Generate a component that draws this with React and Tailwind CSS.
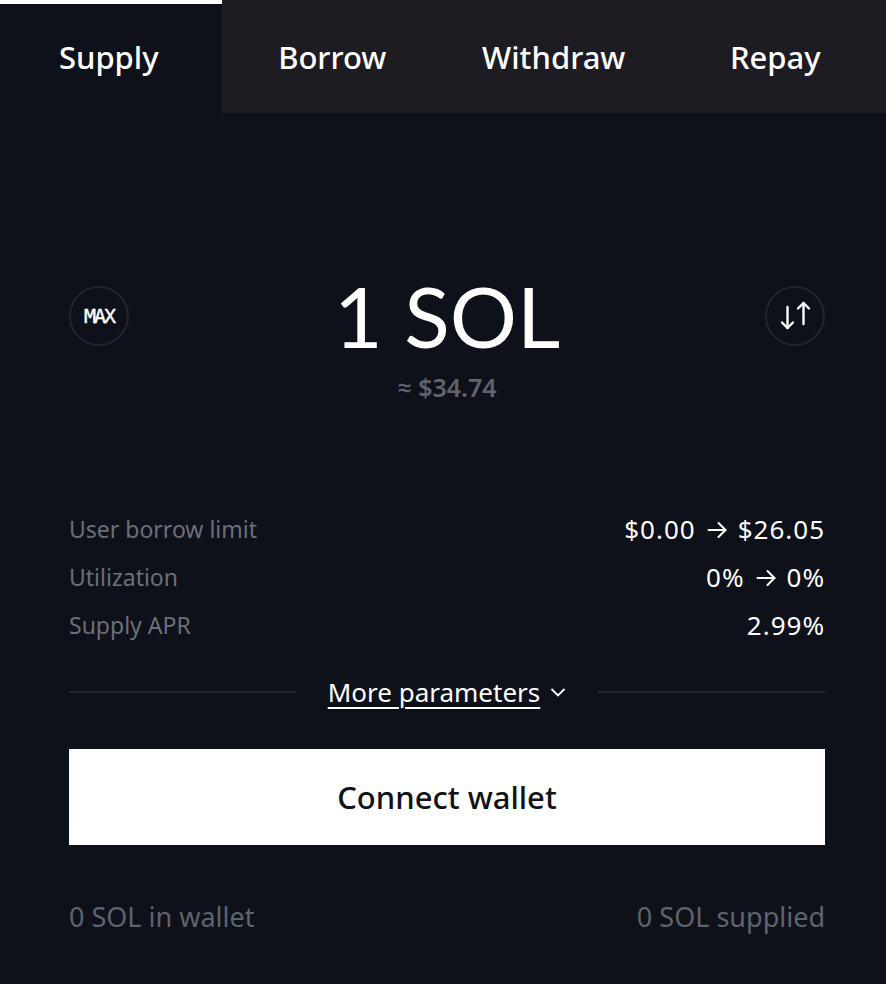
import React from "react";

const sans = { fontFamily: '"Noto Sans", "Open Sans", sans-serif' };

function SwapIcon() {
  return (
    <svg width="36" height="36" viewBox="0 0 36 36" fill="none" stroke="white" strokeWidth="2.4" strokeLinecap="round" strokeLinejoin="round">
      <path d="M10.5 9V30" />
      <path d="M5 24.5L10.5 30L16 24.5" />
      <path d="M26.5 5V26" />
      <path d="M21 10.5L26.5 5L32 10.5" />
    </svg>
  );
}

function Arrow() {
  return (
    <svg width="20" height="18" viewBox="0 0 20 18" fill="none" stroke="white" strokeWidth="2" strokeLinecap="round" strokeLinejoin="round" className="inline-block shrink-0 w-[20px] h-[18px] mx-[11px] mt-[1px]">
      <path d="M1.5 9H18.5" />
      <path d="M11.5 2L18.5 9L11.5 16" />
    </svg>
  );
}

function Row({ label, value }) {
  return (
    <div className="flex items-center justify-between h-[48px]">
      <span className="text-[23px] text-[#6b6f78]">{label}</span>
      <span className="text-[26px] text-white flex items-center tracking-[1px]">{value}</span>
    </div>
  );
}

export default function App() {
  return (
    <div className="w-[886px] h-[984px] bg-[#0e111a] flex flex-col" style={sans}>
      <div className="flex h-[113px] bg-[#1c1c22]">
        {["Supply", "Borrow", "Withdraw", "Repay"].map((t, i) => (
          <div
            key={t}
            className={
              "flex-1 flex items-center justify-center text-[31px] font-medium text-white " +
              (i === 0 ? "bg-[#0e111a] border-t-4 border-white" : "")
            }
          >
            <span className={i === 0 ? "-mt-[2px] -translate-x-[2px]" : "mt-[2px]"}>{t}</span>
          </div>
        ))}
      </div>

      <div className="flex flex-col pl-[69px] pr-[61px]">
        <div className="flex items-center justify-between mt-[173px] h-[60px]">
          <div className="w-[60px] h-[60px] rounded-full border-2 border-[#22252d] flex items-center justify-center">
            <span className="text-[20px] text-white" style={{ fontFamily: '"DejaVu Sans Mono", monospace', letterSpacing: "-2px", WebkitTextStroke: "0.4px white" }}>MAX</span>
          </div>
          <div className="text-[84px] font-normal text-white leading-none" style={{ fontFamily: 'Lato, sans-serif' }}>1 SOL</div>
          <div className="w-[60px] h-[60px] rounded-full border-2 border-[#22252d] flex items-center justify-center">
            <SwapIcon />
          </div>
        </div>
        <div className="flex justify-center mt-[28px] h-[28px] items-center">
          <span className="text-[25px] font-semibold text-[#5f636c]">≈ $34.74</span>
        </div>

        <div className="flex flex-col mt-[103px]">
          <Row label="User borrow limit" value={<>$0.00<Arrow />$26.05</>} />
          <Row label="Utilization" value={<>0%<Arrow />0%</>} />
          <Row label="Supply APR" value="2.99%" />
        </div>

        <div className="flex items-center mt-[25px] h-[36px]">
          <div className="flex-1 h-[2px] bg-[#23262e]" />
          <div className="flex items-center gap-[10px] px-[32px]">
            <span className="text-[26px] text-white underline underline-offset-[5px] decoration-2">More parameters</span>
            <svg width="16" height="12" viewBox="0 0 16 12" fill="none" stroke="white" strokeWidth="1.8">
              <path d="M1.5 3L8 9.5L14.5 3" />
            </svg>
          </div>
          <div className="flex-1 h-[2px] bg-[#23262e]" />
        </div>

        <button className="mt-[39px] h-[96px] bg-white flex items-center justify-center">
          <span className="text-[31px] font-medium text-[#111218]">Connect wallet</span>
        </button>

        <div className="flex justify-between mt-[52px]">
          <span className="text-[27px] text-[#5f636c]">0 SOL in wallet</span>
          <span className="text-[27px] text-[#5f636c]">0 SOL supplied</span>
        </div>
      </div>
    </div>
  );
}
